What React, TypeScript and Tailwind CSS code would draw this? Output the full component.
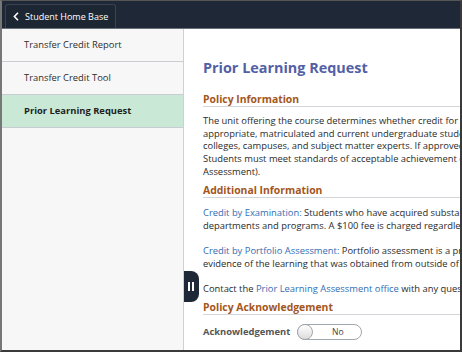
import React, { useState } from 'react';

const navItems = ['Transfer Credit Report', 'Transfer Credit Tool', 'Prior Learning Request'];

function SectionHeading({ children }: { children: React.ReactNode }) {
  return (
    <div className="border-b border-[#d2d6db] text-[10.4px] font-bold leading-[14px] text-[#a3561c]">
      {children}
    </div>
  );
}

export default function App() {
  const [active, setActive] = useState('Prior Learning Request');
  const [acknowledged, setAcknowledged] = useState(false);

  return (
    <div
      className="flex h-[352px] w-[462px] flex-col overflow-hidden border-b-2 border-l-2 border-r-2 border-t border-b-[#3a3a3a] border-l-[#777] border-r-[#3a3a3a] border-t-[#555] bg-white"
      style={{ fontFamily: '"Open Sans", "Noto Sans", sans-serif' }}
    >
      {/* Top bar */}
      <div className="flex h-[28px] shrink-0 items-end border-b border-[#6b7078] bg-[#1f2836] pl-[3px]">
        <button className="flex h-[24px] w-[111px] items-center gap-[6px] rounded-t-[3px] border border-b-0 border-[#3a4350] bg-[#1d2633] pl-[7px] text-[9px] text-white">
          <svg width="6" height="9" viewBox="0 0 6 9" fill="none">
            <path d="M5 0.8 L1.4 4.5 L5 8.2" stroke="white" strokeWidth="1.6" />
          </svg>
          Student Home Base
        </button>
      </div>

      <div className="flex min-h-0 flex-1">
        {/* Sidebar */}
        <nav className="w-[182px] shrink-0 border-r border-[#cdd1d6] bg-[#f7f7f7]">
          {navItems.map((item) => (
            <button
              key={item}
              onClick={() => setActive(item)}
              className={`flex h-[33px] w-full items-center border-b border-[#c9cdd3] pl-[22px] text-left text-[9.4px] ${
                active === item ? 'bg-[#c9e9d6] font-bold text-[#1e1e1e]' : 'text-[#2e2e2e]'
              }`}
            >
              {item}
            </button>
          ))}
        </nav>

        {/* Main content */}
        <main className="relative min-w-0 flex-1 overflow-hidden pl-[19px] pt-[30px] text-[9.4px] leading-[12.65px] text-[#2b2b2b]">
          <h1 className="whitespace-nowrap text-[14.4px] font-bold leading-[18px] text-[#5360a5]">Prior Learning Request</h1>

          <div className="mt-[15px] w-[600px]">
            <SectionHeading>Policy Information</SectionHeading>
            <p className="mt-[8px] whitespace-nowrap">
              The unit offering the course determines whether credit for prior learning can be awarded. This option is
              <br />
              appropriate, matriculated and current undergraduate students. Assessment methods are set by the
              <br />
              colleges, campuses, and subject matter experts. If approved, credit is awarded at the course level.
              <br />
              Students must meet standards of acceptable achievement established by the department (Credit by Portfolio
              <br />
              Assessment).
            </p>

            <div className="mt-[4.5px]">
              <SectionHeading>Additional Information</SectionHeading>
            </div>
            <p className="mt-[9.5px] whitespace-nowrap">
              <a className="text-[#336db3]">Credit by Examination:</a> Students who have acquired substantial knowledge may take exams offered by
              <br />
              departments and programs. A $100 fee is charged regardless of the outcome of the examination.
            </p>
            <p className="mt-[12.4px] whitespace-nowrap">
              <a className="text-[#336db3]">Credit by Portfolio Assessment:</a> Portfolio assessment is a process in which students present
              <br />
              evidence of the learning that was obtained from outside of the classroom.
            </p>
            <p className="mt-[12.3px] whitespace-nowrap">
              Contact the <a className="text-[#336db3]">Prior Learning Assessment office</a> with any questions.
            </p>

            <div className="mt-[4.7px]">
              <SectionHeading>Policy Acknowledgement</SectionHeading>
            </div>
            <div className="mt-[9px] flex items-center gap-[7px]">
              <span className="font-bold text-[#555]">Acknowledgement</span>
              <button
                onClick={() => setAcknowledged(!acknowledged)}
                className="relative flex h-[16px] w-[65px] items-center rounded-full border border-[#a3a8ae] bg-white"
              >
                <span className="absolute left-[-1px] top-[-1px] h-[16px] w-[16px] rounded-full border border-[#a3a8ae] bg-gradient-to-b from-white to-[#dcdcdc]" />
                <span className="ml-[16px] flex-1 text-center text-[8.6px] leading-[14px] text-[#444]">{acknowledged ? 'Yes' : 'No'}</span>
              </button>
            </div>
          </div>

          {/* Collapse handle */}
          <div className="absolute left-[-1px] top-[242px] flex h-[31px] w-[16px] items-center justify-center rounded-r-[8px] bg-[#1f2836]">
            <span className="flex gap-[2px]">
              <span className="h-[9px] w-[2px] bg-white" />
              <span className="h-[9px] w-[2px] bg-white" />
            </span>
          </div>
        </main>
      </div>
    </div>
  );
}
